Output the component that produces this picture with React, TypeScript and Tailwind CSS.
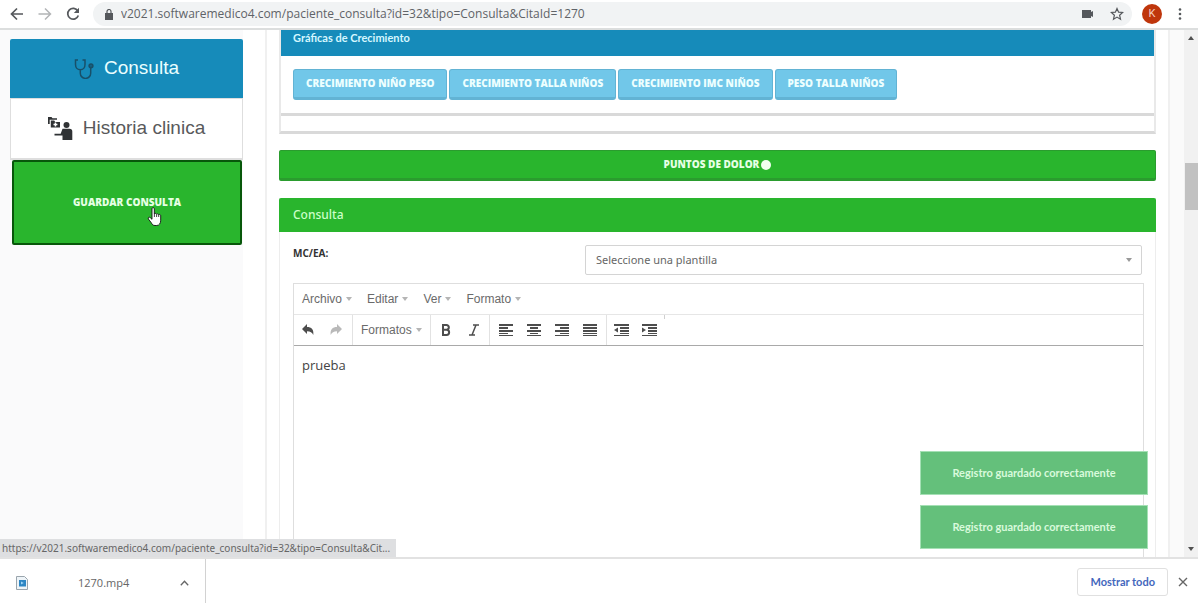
import React from "react";

function Caret({ className = "" }: { className?: string }) {
  return (
    <svg viewBox="0 0 6 4" className={`h-1 w-1.5 shrink-0 ${className}`} aria-hidden="true">
      <path d="M0 0h6L3 4z" fill="currentColor" />
    </svg>
  );
}

function BrowserBar() {
  return (
    <header className="flex h-[30px] shrink-0 items-center border-b-2 border-[#dcdede] bg-white pr-2.5 pl-[9px] text-[#55585c]">
      <button aria-label="Atrás" className="flex w-7 shrink-0">
        <svg viewBox="0 0 16 16" className="h-4 w-4" fill="none" stroke="currentColor" strokeWidth="1.7">
          <path d="M14 8H2.500M8 2.500 2.500 8 8 13.500" />
        </svg>
      </button>
      <button aria-label="Adelante" className="flex w-7 shrink-0 text-[#b3b5b7]">
        <svg viewBox="0 0 16 16" className="h-4 w-4" fill="none" stroke="currentColor" strokeWidth="1.5">
          <path d="M1.500 8H13.500M8 2.500 13.500 8 8 13.500" />
        </svg>
      </button>
      <button aria-label="Recargar" className="flex w-7 shrink-0">
        <svg viewBox="0 0 16 16" className="h-4 w-4" fill="none" stroke="currentColor" strokeWidth="1.7">
          <path d="M12.800 5A5.400 5.400 0 1 0 13.300 9.500" />
          <path d="M14 1.800V7H8.800z" fill="currentColor" stroke="none" />
        </svg>
      </button>
      <div className="flex h-6 min-w-0 flex-1 items-center rounded-full bg-[#f1f3f4] pr-2 pl-3">
        <svg viewBox="0 0 8 11" className="mr-2 h-[11px] w-2 shrink-0" aria-hidden="true">
          <path d="M0 4h8v7H0z" fill="currentColor" />
          <path d="M2 4.500V2.500a2 2 0 0 1 4 0v2" fill="none" stroke="currentColor" strokeWidth="1.200" />
        </svg>
        <input
          aria-label="Dirección"
          className="min-w-0 flex-1 bg-transparent font-['Open_Sans',sans-serif] text-xs text-[#5f6368] outline-none"
          defaultValue="v2021.softwaremedico4.com/paciente_consulta?id=32&tipo=Consulta&CitaId=1270"
        />
        <button aria-label="Cámara" className="mr-4 flex">
          <svg viewBox="0 0 12 10" className="h-2.5 w-3">
            <path d="M0 1h9v2l2-1v6L9 7v2H0z" fill="currentColor" />
          </svg>
        </button>
        <button aria-label="Marcador" className="flex">
          <svg viewBox="0 0 14 14" className="h-3.5 w-3.5" fill="none" stroke="currentColor" strokeWidth="1.200">
            <path d="M7 1.500 8.600 5.200l4 .3-3 2.700.9 4L7 10.100 3.500 12.200l.9-4-3-2.700 4-.3z" />
          </svg>
        </button>
      </div>
      <button
        aria-label="Perfil"
        className="ml-2.5 flex h-5 w-5 shrink-0 items-center justify-center rounded-full bg-[#bf360c] font-['Roboto',sans-serif] text-[11px] text-[#f5cfc2]"
      >
        K
      </button>
      <button aria-label="Menú" className="ml-2.5 flex w-4 shrink-0 justify-center">
        <svg viewBox="0 0 4 14" className="h-3.5 w-1" fill="currentColor">
          <circle cx="2" cy="2.500" r="1.300" />
          <circle cx="2" cy="7" r="1.300" />
          <circle cx="2" cy="11.500" r="1.300" />
        </svg>
      </button>
    </header>
  );
}

function Sidebar() {
  return (
    <aside className="w-[243px] shrink-0 bg-[#fafafb] pt-[9px] pl-2.5">
      <nav className="rounded-t-xs border-b-2 border-[#dedede] font-['Liberation_Sans',Arial,sans-serif] text-[19px]">
        <a href="#consulta" className="flex h-[59px] items-center justify-center gap-2.5 rounded-t-xs bg-[#168bba] text-[#eaffff]">
          <svg viewBox="0 0 20 20" className="h-5 w-5" fill="none" stroke="#185069" strokeWidth="1.500" aria-hidden="true">
            <path d="M4 1H1.500V5.500c0 3 2 5.300 4.800 5.300S11 8.500 11 5.500V1H8.500M6.300 10.800v3.400a5 5 0 0 0 10.400 0V8.500" />
            <circle cx="17" cy="6.800" r="1.900" fill="#185069" fillOpacity=".7" />
          </svg>
          Consulta
        </a>
        <a href="#historia" className="flex h-[60px] items-center justify-center gap-2.5 border-x border-t border-[#dedede] bg-white text-[#58595b]">
          <svg viewBox="0 0 25 24" className="h-6 w-[25px]" fill="#2f3234" aria-hidden="true">
            <path d="M0 0h3.500l1 1.300H9v1.500H1.700V7H0z" />
            <path d="M2.800 3.600h3.400l1 1.300H12V10.500H2.800z" />
            <path d="M6.700 5.600h1.500v1.200h1.200v1.500H8.200v1.200H6.700V8.300H5.500V6.800h1.200z" fill="#fff" />
            <circle cx="18.500" cy="8" r="3" />
            <path d="M14.500 11.800h7q2.800 0 2.800 2.700V23H14.500v-4.500H6.500v-1.800h6.200z" />
          </svg>
          Historia clinica
        </a>
      </nav>
      <div className="pr-px pl-0.5">
        <div className="relative">
          <button className="flex h-[85px] w-full items-center justify-center rounded-xs border-2 border-[#07570a] bg-[#29b52d] font-['Open_Sans',sans-serif] text-[10px] font-extrabold text-[#e6ffe4]">
            GUARDAR CONSULTA
          </button>
          <svg viewBox="0 0 16 20" className="pointer-events-none absolute top-[47px] left-[135px] h-5 w-4" aria-hidden="true">
            <path
              d="M5 1.700C5 .3 7.300.3 7.300 1.700V7c.4-1 2-.8 2.200.3.500-.8 1.900-.6 2.100.5.6-.7 2.100-.4 2.100.9v4.500c0 3-1.300 5.300-4 5.300H8c-2 0-2.800-1-3.700-2.700L1.400 12c-.7-1.400.8-2.400 1.900-1.300L5 12.300z"
              fill="#fff"
              stroke="#111"
              strokeWidth=".9"
            />
            <path d="M7.400 7v3M9.600 7.500V10M11.700 8v2" stroke="#111" strokeWidth=".8" />
          </svg>
        </div>
      </div>
    </aside>
  );
}

const charts = ["CRECIMIENTO NIÑO PESO", "CRECIMIENTO TALLA NIÑOS", "CRECIMIENTO IMC NIÑOS", "PESO TALLA NIÑOS"];

function GrowthCharts() {
  return (
    <section className="border-x-2 border-b-3 border-[#e9e9e9] border-b-[#d9d9d9]">
      <div className="border-b-3 border-[#d9d9d9]">
        <h2 className="h-[26px] bg-[#168bba] pl-3 font-['Lato',sans-serif] text-[11px] leading-4 font-bold text-[#d5f7ff]">
          Gráficas de Crecimiento
        </h2>
        <div className="flex flex-wrap gap-x-0.5 px-3 pt-[13px] pb-[13px]">
          {charts.map((label) => (
            <button
              key={label}
              className="h-[31px] rounded-[3px] border border-b-3 border-[#62b3d4] bg-[#71c7e9] px-3 font-['Open_Sans',sans-serif] text-[10px] font-extrabold text-[#edffff]"
            >
              {label}
            </button>
          ))}
        </div>
      </div>
      <div className="h-[15px]" />
    </section>
  );
}

const menus = ["Archivo", "Editar", "Ver", "Formato"];

const lineIcons: { label: string; d: string }[] = [
  { label: "Alinear a la izquierda", d: "M0 1h14v2H0zM0 4h9v2H0zM0 7h14v2H0zM0 10h9v1H0zM0 12h14v1H0z" },
  { label: "Centrar", d: "M0 1h14v2H0zM3 4h8v2H3zM0 7h14v2H0zM3 10h8v1H3zM0 12h14v1H0z" },
  { label: "Alinear a la derecha", d: "M0 1h14v2H0zM5 4h9v2H5zM0 7h14v2H0zM5 10h9v1H5zM0 12h14v1H0z" },
  { label: "Justificar", d: "M0 1h14v2H0zM0 4h14v2H0zM0 7h14v2H0zM0 10h14v1H0zM0 12h14v1H0z" },
];

const indentLines = "M0 1h15v2H0zM6 4h9v2H6zM6 7h9v2H6zM6 10h9v1H6zM0 12h15v1H0z";

const indentIcons: { label: string; arrow: string }[] = [
  { label: "Disminuir sangría", arrow: "M4 4.500v5L0 7z" },
  { label: "Aumentar sangría", arrow: "M0 4.500v5l4-2.500z" },
];

function Tool({ label, children }: { label: string; children: React.ReactNode }) {
  return (
    <button aria-label={label} className="flex h-full w-7 items-center justify-center">
      {children}
    </button>
  );
}

function Editor() {
  return (
    <div className="-mr-0.5 flex flex-1 flex-col border border-[#dedede] bg-white font-['Liberation_Sans',Arial,sans-serif] text-[12px] text-[#6a6a6a]">
      <div className="flex h-[31px] shrink-0 items-center gap-[15px] border-b border-[#e6e6e6] pl-2">
        {menus.map((m) => (
          <button key={m} className="flex items-center gap-1">
            {m}
            <Caret className="text-[#b5b5b5]" />
          </button>
        ))}
      </div>
      <div className="flex h-[31px] shrink-0 items-center border-b border-[#a9a9a9] text-[#4d4d4d]">
        <div className="flex h-full border-r border-[#e2e2e2] pr-0.5">
          <Tool label="Deshacer">
            <svg viewBox="0 0 14 12" className="h-3 w-3.5" fill="currentColor">
              <path d="M6 0v3c4.500 0 7 2.500 6.300 8C11 8.500 9.500 7.300 6 7.300V10L1 5z" />
            </svg>
          </Tool>
          <Tool label="Rehacer">
            <svg viewBox="0 0 14 12" className="h-3 w-3.5" fill="#b9b9b9">
              <path d="M8 0v3C3.500 3 1 5.500 1.700 11 3 8.500 4.500 7.300 8 7.300V10l5-5z" />
            </svg>
          </Tool>
        </div>
        <button className="flex h-full items-center gap-1 border-r border-[#e2e2e2] px-2 text-[#6a6a6a]">
          Formatos
          <Caret className="text-[#b5b5b5]" />
        </button>
        <div className="flex h-full border-r border-[#e2e2e2] pr-px pl-px">
          <Tool label="Negrita">
            <svg viewBox="0 0 10 12" className="h-3 w-2.5" fill="none" stroke="currentColor" strokeWidth="2">
              <path d="M2 1v10M1 1h4.500a2.300 2.300 0 0 1 0 4.700H2M5.500 5.700a2.600 2.600 0 0 1 0 5.300H1" />
            </svg>
          </Tool>
          <Tool label="Cursiva">
            <svg viewBox="0 0 12 12" className="h-3 w-3" fill="none" stroke="currentColor" strokeWidth="1.500">
              <path d="M5 1h6M1 11h6M8 1 4 11" />
            </svg>
          </Tool>
        </div>
        <div className="flex h-full border-r border-[#e2e2e2] pr-0.5 pl-0.5">
          {lineIcons.map((i) => (
            <Tool key={i.label} label={i.label}>
              <svg viewBox="0 0 14 14" className="h-3.5 w-3.5" fill="currentColor">
                <path d={i.d} />
              </svg>
            </Tool>
          ))}
        </div>
        <div className="flex h-full pl-px">
          {indentIcons.map((i) => (
            <Tool key={i.label} label={i.label}>
              <svg viewBox="0 0 15 14" className="h-3.5 w-[15px]" fill="currentColor">
                <path d={indentLines} />
                <path d={i.arrow} />
              </svg>
            </Tool>
          ))}
        </div>
        <span className="h-1 w-px self-start bg-[#d0d0d0]" />
      </div>
      <textarea
        aria-label="Contenido"
        className="min-h-60 w-full flex-1 resize-none px-2 py-[9px] font-['Open_Sans',sans-serif] text-[13px] leading-5 text-[#444] outline-none"
        defaultValue="prueba"
      />
    </div>
  );
}

function ConsultaPanel() {
  return (
    <section className="mt-[17px] flex flex-1 flex-col border-x border-[#ededed]">
      <h2 className="-mx-px flex h-[34px] shrink-0 items-center rounded-t-xs bg-[#29b52d] pl-3.5 font-['Noto_Sans','Open_Sans',sans-serif] text-xs font-medium text-[#ccffc8]">
        Consulta
      </h2>
      <div className="flex flex-1 flex-col px-[13px] pt-[13px]">
        <div className="mb-2 flex items-start">
          <label
            htmlFor="plantilla"
            className="w-1/3 grow font-['Open_Sans',sans-serif] text-[10px] leading-4 font-bold text-[#333]"
          >
            MC/EA:
          </label>
          <div className="relative w-[557px] max-w-2/3 shrink-0">
            <select
              id="plantilla"
              className="h-[30px] w-full appearance-none rounded-xs border border-[#d4d4d4] bg-white px-2.5 font-['Noto_Sans','Open_Sans',sans-serif] text-[11px] text-[#666] outline-none"
            >
              <option>Seleccione una plantilla</option>
            </select>
            <Caret className="pointer-events-none absolute top-[13px] right-2.5 text-[#999]" />
          </div>
        </div>
        <Editor />
      </div>
    </section>
  );
}

function Toast() {
  return (
    <div
      role="status"
      className="flex h-11 w-[228px] items-center justify-center border border-[#a5e0b5] bg-[#64c07b] font-['Lato',sans-serif] text-[11px] font-bold text-[#d9fadc]"
    >
      Registro guardado correctamente
    </div>
  );
}

function Scrollbar() {
  return (
    <div className="flex w-3.5 shrink-0 flex-col items-center bg-[#f1f1f1] py-1.5 text-[#505050]" aria-hidden="true">
      <Caret className="rotate-180" />
      <div className="h-[123px]" />
      <div className="ml-0.5 h-[47px] w-full bg-[#c1c1c1]" />
      <div className="flex-1" />
      <Caret />
    </div>
  );
}

function DownloadBar() {
  return (
    <footer className="flex h-[46px] shrink-0 items-center border-t-2 border-[#e2e2e2] bg-white font-['Open_Sans',sans-serif] text-[11px] text-[#666]">
      <div className="flex h-full w-[206px] items-center border-r border-[#d2d2d2] pt-1 pr-4 pl-4">
        <svg viewBox="0 0 12 14" className="h-3.5 w-3" aria-hidden="true">
          <path d="M.5.5h8l3 3v10H.5z" fill="#eef4f8" stroke="#9aa5ad" />
          <path d="M3 4h7v6.500H3z" fill="#2d86c4" />
          <path d="M5 5.500v3L7.800 7z" fill="#9fd4f5" />
        </svg>
        <span className="flex-1 pl-[50px]">1270.mp4</span>
        <button aria-label="Opciones de descarga">
          <svg viewBox="0 0 9 6" className="h-1.5 w-[9px]" fill="none" stroke="currentColor" strokeWidth="1.300">
            <path d="M.8 5.200 4.500 1.200l3.700 4" />
          </svg>
        </button>
      </div>
      <div className="flex-1" />
      <button className="mt-0.5 mr-2.5 h-7 rounded-[3px] border border-[#e0e0e0] px-3 font-['Lato',sans-serif] font-bold text-[#4468bd]">
        Mostrar todo
      </button>
      <button aria-label="Cerrar" className="mt-0.5 mr-2.5">
        <svg viewBox="0 0 10 10" className="h-2.5 w-2.5" fill="none" stroke="currentColor" strokeWidth="1.400">
          <path d="m1 1 8 8M9 1 1 9" />
        </svg>
      </button>
    </footer>
  );
}

export default function App() {
  return (
    <div className="flex h-screen flex-col overflow-hidden bg-white">
      <BrowserBar />
      <div className="relative flex min-h-0 flex-1">
        <Sidebar />
        <main className="ml-[22px] flex min-w-0 flex-1 flex-col overflow-hidden border-x-2 border-[#f0f0f0] bg-white px-3">
          <GrowthCharts />
          <button className="mt-4 flex h-[31px] shrink-0 items-center justify-center rounded-xs border border-b-3 border-[#2a9c2e] bg-[#29b52d] font-['Open_Sans',sans-serif] text-[10px] font-extrabold text-[#e6ffe4]">
            PUNTOS DE DOLOR
            <svg viewBox="0 0 10 10" className="ml-0.5 h-2.5 w-2.5" aria-hidden="true">
              <circle cx="5" cy="5" r="5" fill="#f1fff0" />
            </svg>
          </button>
          <ConsultaPanel />
        </main>
        <div className="w-3.5 shrink-0 bg-[#fafafa]" />
        <Scrollbar />
        <div className="absolute right-[50px] bottom-2 flex flex-col gap-2.5">
          <Toast />
          <Toast />
        </div>
        <div className="absolute bottom-0 left-0 h-[18px] w-[396px] truncate bg-[#dedfe1] px-0.5 font-['Noto_Sans','Open_Sans',sans-serif] text-[10px] leading-[18px] text-[#666]">
          https://v2021.softwaremedico4.com/paciente_consulta?id=32&tipo=Consulta&Cit...
        </div>
      </div>
      <DownloadBar />
    </div>
  );
}
